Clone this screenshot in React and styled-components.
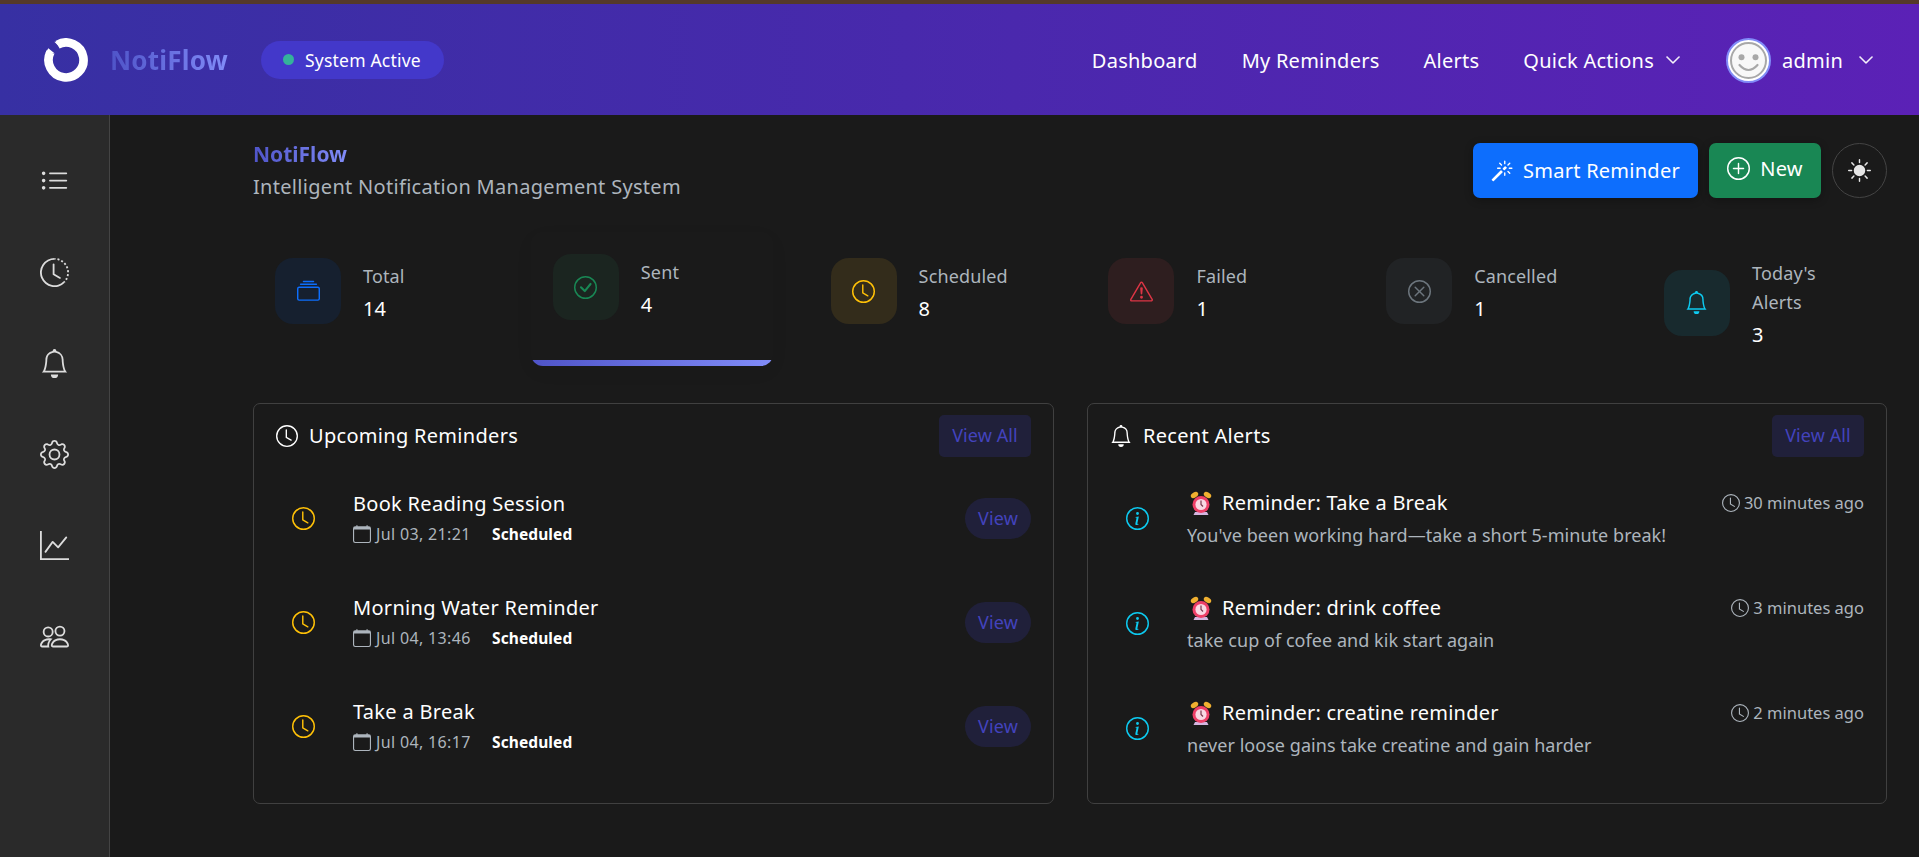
import React from 'react';
import styled, { createGlobalStyle } from 'styled-components';
import {
  BsListUl, BsClockHistory, BsBell, BsGear, BsGraphUp, BsPeople, BsCollection, BsCheckCircle, BsClock,
  BsExclamationTriangle, BsXCircle, BsInfoCircle, BsCalendar, BsMagic, BsPlusCircle, BsSunFill, BsChevronDown,
} from 'react-icons/bs';

const Global = createGlobalStyle`
  html, body { margin: 0; padding: 0; height: 100%; background: #1a1a1a; overflow: hidden; }
  body { font-family: "Noto Sans", "Open Sans", sans-serif; color: #fff; }
  #root { height: 100%; }
`;

const Page = styled.div`
  width: 1919px; height: 857px; display: flex; flex-direction: column; border-top: 4px solid #55392a; box-sizing: border-box;
`;
const Navbar = styled.header`
  height: 111px; flex: none; display: flex; align-items: center; padding: 0 45px 0 44px;
  background: linear-gradient(90deg, #3730a3, #5b21b6);
`;
const Brand = styled.span`
  margin-left: 22px; font-size: 26px; font-weight: 700; letter-spacing: 0.2px;
  background: linear-gradient(90deg, #4f54c8, #818cf8); -webkit-background-clip: text; background-clip: text; color: transparent;
`;
const StatusPill = styled.div`
  margin-left: 33px; height: 38px; width: 183px; box-sizing: border-box; display: flex; align-items: center; gap: 11px; padding-left: 22px;
  border-radius: 19px; background: #4338ca; font-size: 17.5px; letter-spacing: 0.2px;
  &::before { content: ''; width: 11px; height: 11px; border-radius: 50%; background: #34b29b; }
`;
const NavLinks = styled.nav`
  margin-left: auto; display: flex; align-items: center; font-size: 20px; letter-spacing: 0.25px; padding-top: 1px;
`;
const NavLink = styled.span`
  margin-left: ${p => p.$gap}px; display: flex; align-items: center; gap: 11px;
`;
const Avatar = styled.svg`
  width: 45px; height: 45px; margin-left: 45px; flex: none;
`;
const UserName = styled.span`
  margin-left: 11px;
`;
const Chevron = styled(BsChevronDown)`
  margin-left: 15px; stroke: currentColor; stroke-width: 0.6px;
`;
const NavChevron = styled(BsChevronDown)`
  stroke: currentColor; stroke-width: 0.6px;
`;
const Body = styled.div`
  flex: 1; display: flex; min-height: 0;
`;
const Sidebar = styled.aside`
  width: 110px; flex: none; box-sizing: border-box; background: #2a2a2a; border-right: 1px solid #444;
  display: flex; flex-direction: column; align-items: center; gap: 62px; padding-top: 52px; padding-right: 1px; color: #dcdcdc;
`;
const Main = styled.main`
  flex: 1; padding: 24px 32px 0 143px; min-width: 0; background: #1a1a1a;
`;
const HeaderRow = styled.div`
  display: flex; justify-content: space-between; align-items: flex-start; height: 76px;
`;
const TitleBlock = styled.div`
  display: flex; flex-direction: column; gap: 3px;
`;
const PageTitle = styled.div`
  font-size: 21px; line-height: 30px; font-weight: 700;
  background: linear-gradient(90deg, #4f54c8, #818cf8); -webkit-background-clip: text; background-clip: text; color: transparent; width: max-content;
`;
const Subtitle = styled.div`
  font-size: 20px; line-height: 30px; color: #adb5bd; letter-spacing: 0.3px;
`;
const Actions = styled.div`
  display: flex; gap: 11px; margin-top: 4px; align-items: center;
`;
const ActionButton = styled.button`
  height: 55px; box-sizing: border-box; border: 0; border-radius: 7px; color: #fff; display: flex; align-items: center; justify-content: center; gap: 10px;
  font: inherit; font-size: 20px; letter-spacing: 0.25px; padding: 0 0 ${p => p.$lift || 0}px; width: ${p => p.$w}px; background: ${p => p.$bg};
  box-shadow: 0 2px 8px rgba(0,0,0,.3);
`;
const ThemeButton = styled.button`
  width: 55px; height: 55px; border-radius: 50%; border: 1px solid #444; background: transparent; color: #e6e6e6; display: flex; align-items: center; justify-content: center; padding: 0;
`;
const Stats = styled.section`
  display: grid; grid-template-columns: repeat(6, 242px); column-gap: 35.8px; margin-top: 21px; height: 134px;
`;
const StatCard = styled.div`
  position: relative; box-sizing: border-box; padding: ${p => (p.$tall ? 20 : 22)}px 0 0 22px; border-radius: 12px; overflow: hidden;
  ${p => p.$active && `transform: translateY(-4px); box-shadow: 0 6px 20px rgba(0,0,0,.04);
    &::after { content: ''; position: absolute; left: 0; right: 0; bottom: 0; height: 6px; background: linear-gradient(90deg, #4f54c8, #818cf8); }`}
`;
const StatInner = styled.div`
  display: flex; align-items: center; gap: 22px;
`;
const StatIcon = styled.div`
  width: 66px; height: 66px; flex: none; border-radius: 18px; display: flex; align-items: center; justify-content: center;
  color: ${p => p.$c}; background: ${p => p.$bg};
`;
const StatText = styled.div`
  min-width: 0; width: 108px; padding-top: 3px;
`;
const StatLabel = styled.div`
  font-size: 18px; line-height: 29px; color: #adb5bd; letter-spacing: 0.15px;
`;
const StatValue = styled.div`
  font-size: 20px; line-height: 29px; color: #fff; margin-top: 3px;
`;
const Panels = styled.section`
  display: grid; grid-template-columns: 801px 800px; gap: 33px; margin-top: 33px;
`;
const Panel = styled.div`
  height: 401px; box-sizing: border-box; border: 1px solid #404040; border-radius: 7px; padding: 11px 22px 0;
`;
const PanelHead = styled.div`
  display: flex; align-items: center; height: 42px;
`;
const PanelTitle = styled.h2`
  margin: 0; display: flex; align-items: center; gap: 11px; font-size: 20px; line-height: 30px; font-weight: 400; letter-spacing: 0.3px;
`;
const ViewAll = styled.button`
  margin-left: auto; width: 92px; height: 42px; border: 0; border-radius: 5px; background: #20203a; color: #4343bd; font: inherit; font-size: 18px; letter-spacing: 0.1px; padding: 0 0 2px;
`;
const Rows = styled.div`
  display: flex; flex-direction: column; margin-top: 8px;
`;
const Row = styled.div`
  display: flex; align-items: center; height: ${p => p.$h}px;
`;
const RowIcon = styled.div`
  width: 77px; flex: none; padding: 2px 0 0 ${p => p.$pad}px; box-sizing: border-box; display: flex; color: ${p => p.$c};
`;
const RowMain = styled.div`
  flex: 1; min-width: 0;
`;
const RowTitle = styled.div`
  font-size: 20px; line-height: 30px; letter-spacing: 0.3px; color: #fff;
`;
const Meta = styled.div`
  margin-top: 3px; display: flex; align-items: center; font-size: 16px; line-height: 24px; color: #adb5bd; letter-spacing: 0.35px;
`;
const MetaDate = styled.span`
  display: flex; align-items: center; gap: 5px; width: 139px;
`;
const Badge = styled.span`
  font-size: 15.5px; font-weight: 700; color: #fff; letter-spacing: 0.1px;
`;
const ViewPill = styled.button`
  width: 66px; height: 41px; margin-top: 2px; border: 0; border-radius: 21px; background: #20203a; color: #4343bd; font: inherit; font-size: 18px; letter-spacing: 0.1px; padding: 0;
`;
const AlertTop = styled.div`
  display: flex; align-items: center; justify-content: space-between; height: 30px;
`;
const AlertTitle = styled.div`
  display: flex; align-items: center; gap: 10px; font-size: 20px; letter-spacing: 0.22px; color: #fff;
`;
const AlertTime = styled.div`
  display: flex; align-items: center; gap: 4px; font-size: 16.5px; color: #adb5bd;
`;
const AlertText = styled.div`
  margin-top: 4px; font-size: 18px; line-height: 26px; color: #adb5bd; letter-spacing: 0.05px; white-space: nowrap;
`;
const EmojiArt = styled.svg`
  width: 22px; height: 24px; margin-left: 3px; flex: none;
`;

const Logo = () => (
  <svg width="44" height="44" viewBox="0 0 44 44" style={{ flex: 'none' }}>
    <path d="M13.5 6.7 A17.5 17.5 0 1 1 6.4 14.1" fill="none" stroke="#fff" strokeWidth="8.7" />
    <path d="M1.6 15 L10.8 15.5 L4.3 10.3 Z M10.3 3.7 L15.3 8.7 L17 5 Z" fill="#fff" />
  </svg>
);
const Smile = () => (
  <Avatar viewBox="0 0 45 45">
    <circle cx="22.5" cy="22.5" r="21.5" fill="#fff" stroke="#818cf8" strokeWidth="2" />
    <circle cx="22.5" cy="22.5" r="17.5" fill="#f8f8f8" stroke="#a8a8a8" strokeWidth="2" />
    <circle cx="15.5" cy="19.2" r="3" fill="#a8a8a8" />
    <circle cx="29.5" cy="19.2" r="3" fill="#a8a8a8" />
    <path d="M13.5 27 Q22.5 37 31.5 27" fill="none" stroke="#a8a8a8" strokeWidth="2.2" strokeLinecap="round" />
  </Avatar>
);
const AlarmClock = () => (
  <EmojiArt viewBox="0 0 22 24">
    <ellipse cx="4.5" cy="4" rx="4" ry="2.6" transform="rotate(-30 4.5 4)" fill="#f0b030" />
    <ellipse cx="17.5" cy="4" rx="4" ry="2.6" transform="rotate(30 17.5 4)" fill="#f0b030" />
    <path d="M5 21 L3.5 24 H18.5 L17 21 Z" fill="#d4b5e0" />
    <circle cx="11" cy="13.5" r="8.5" fill="#ee3f68" />
    <circle cx="11" cy="13.5" r="5.6" fill="#f9d8e4" />
    <path d="M11 9.5 V13.5 L13 15.5" fill="none" stroke="#7a3a50" strokeWidth="1.2" />
  </EmojiArt>
);

const stats = [
  { label: 'Total', value: '14', Icon: BsCollection, c: '#0d6efd', bg: '#16202f' },
  { label: 'Sent', value: '4', Icon: BsCheckCircle, c: '#198754', bg: '#1b2520', active: true },
  { label: 'Scheduled', value: '8', Icon: BsClock, c: '#ffc107', bg: '#332c1b' },
  { label: 'Failed', value: '1', Icon: BsExclamationTriangle, c: '#dc3545', bg: '#2e1e1f' },
  { label: 'Cancelled', value: '1', Icon: BsXCircle, c: '#6c757d', bg: '#212325' },
  { label: "Today's Alerts", value: '3', Icon: BsBell, c: '#0dcaf0', bg: '#182a2e', tall: true },
];
const reminders = [
  ['Book Reading Session', 'Jul 03, 21:21'],
  ['Morning Water Reminder', 'Jul 04, 13:46'],
  ['Take a Break', 'Jul 04, 16:17'],
];
const alerts = [
  ['Reminder: Take a Break', '30 minutes ago', "You've been working hard—take a short 5-minute break!"],
  ['Reminder: drink coffee', '3 minutes ago', 'take cup of cofee and kik start again'],
  ['Reminder: creatine reminder', '2 minutes ago', 'never loose gains take creatine and gain harder'],
];

export default function App() {
  return (
    <Page>
      <Global />
      <Navbar>
        <Logo />
        <Brand>NotiFlow</Brand>
        <StatusPill>System Active</StatusPill>
        <NavLinks>
          <NavLink $gap={0}>Dashboard</NavLink>
          <NavLink $gap={44}>My Reminders</NavLink>
          <NavLink $gap={44}>Alerts</NavLink>
          <NavLink $gap={44}>Quick Actions <NavChevron size={16} /></NavLink>
          <Smile />
          <UserName>admin</UserName>
          <Chevron size={16} />
        </NavLinks>
      </Navbar>
      <Body>
        <Sidebar>
          <BsListUl size={29} />
          <BsClockHistory size={29} />
          <BsBell size={29} />
          <BsGear size={29} />
          <BsGraphUp size={29} />
          <BsPeople size={29} />
        </Sidebar>
        <Main>
          <HeaderRow>
            <TitleBlock>
              <PageTitle>NotiFlow</PageTitle>
              <Subtitle>Intelligent Notification Management System</Subtitle>
            </TitleBlock>
            <Actions>
              <ActionButton $w={225} $bg="#0d6efd"><BsMagic size={22} />Smart Reminder</ActionButton>
              <ActionButton $w={112} $bg="#198754" $lift={4}><BsPlusCircle size={23} />New</ActionButton>
              <ThemeButton><BsSunFill size={23} /></ThemeButton>
            </Actions>
          </HeaderRow>
          <Stats>
            {stats.map(({ label, value, Icon, c, bg, active, tall }) => (
              <StatCard key={label} $active={active} $tall={tall}>
                <StatInner>
                  <StatIcon $c={c} $bg={bg}><Icon size={23} /></StatIcon>
                  <StatText>
                    <StatLabel>{label}</StatLabel>
                    <StatValue>{value}</StatValue>
                  </StatText>
                </StatInner>
              </StatCard>
            ))}
          </Stats>
          <Panels>
            <Panel>
              <PanelHead>
                <PanelTitle><BsClock size={22} />Upcoming Reminders</PanelTitle>
                <ViewAll>View All</ViewAll>
              </PanelHead>
              <Rows>
                {reminders.map(([t, d]) => (
                  <Row key={t} $h={104}>
                    <RowIcon $pad={16} $c="#ffc107"><BsClock size={23} /></RowIcon>
                    <RowMain>
                      <RowTitle>{t}</RowTitle>
                      <Meta>
                        <MetaDate><BsCalendar size={18} />{d}</MetaDate>
                        <Badge>Scheduled</Badge>
                      </Meta>
                    </RowMain>
                    <ViewPill>View</ViewPill>
                  </Row>
                ))}
              </Rows>
            </Panel>
            <Panel>
              <PanelHead>
                <PanelTitle><BsBell size={22} />Recent Alerts</PanelTitle>
                <ViewAll>View All</ViewAll>
              </PanelHead>
              <Rows>
                {alerts.map(([t, w, s]) => (
                  <Row key={t} $h={105}>
                    <RowIcon $pad={16} $c="#0dcaf0"><BsInfoCircle size={23} /></RowIcon>
                    <RowMain>
                      <AlertTop>
                        <AlertTitle><AlarmClock />{t}</AlertTitle>
                        <AlertTime><BsClock size={18} />{w}</AlertTime>
                      </AlertTop>
                      <AlertText>{s}</AlertText>
                    </RowMain>
                  </Row>
                ))}
              </Rows>
            </Panel>
          </Panels>
        </Main>
      </Body>
    </Page>
  );
}
